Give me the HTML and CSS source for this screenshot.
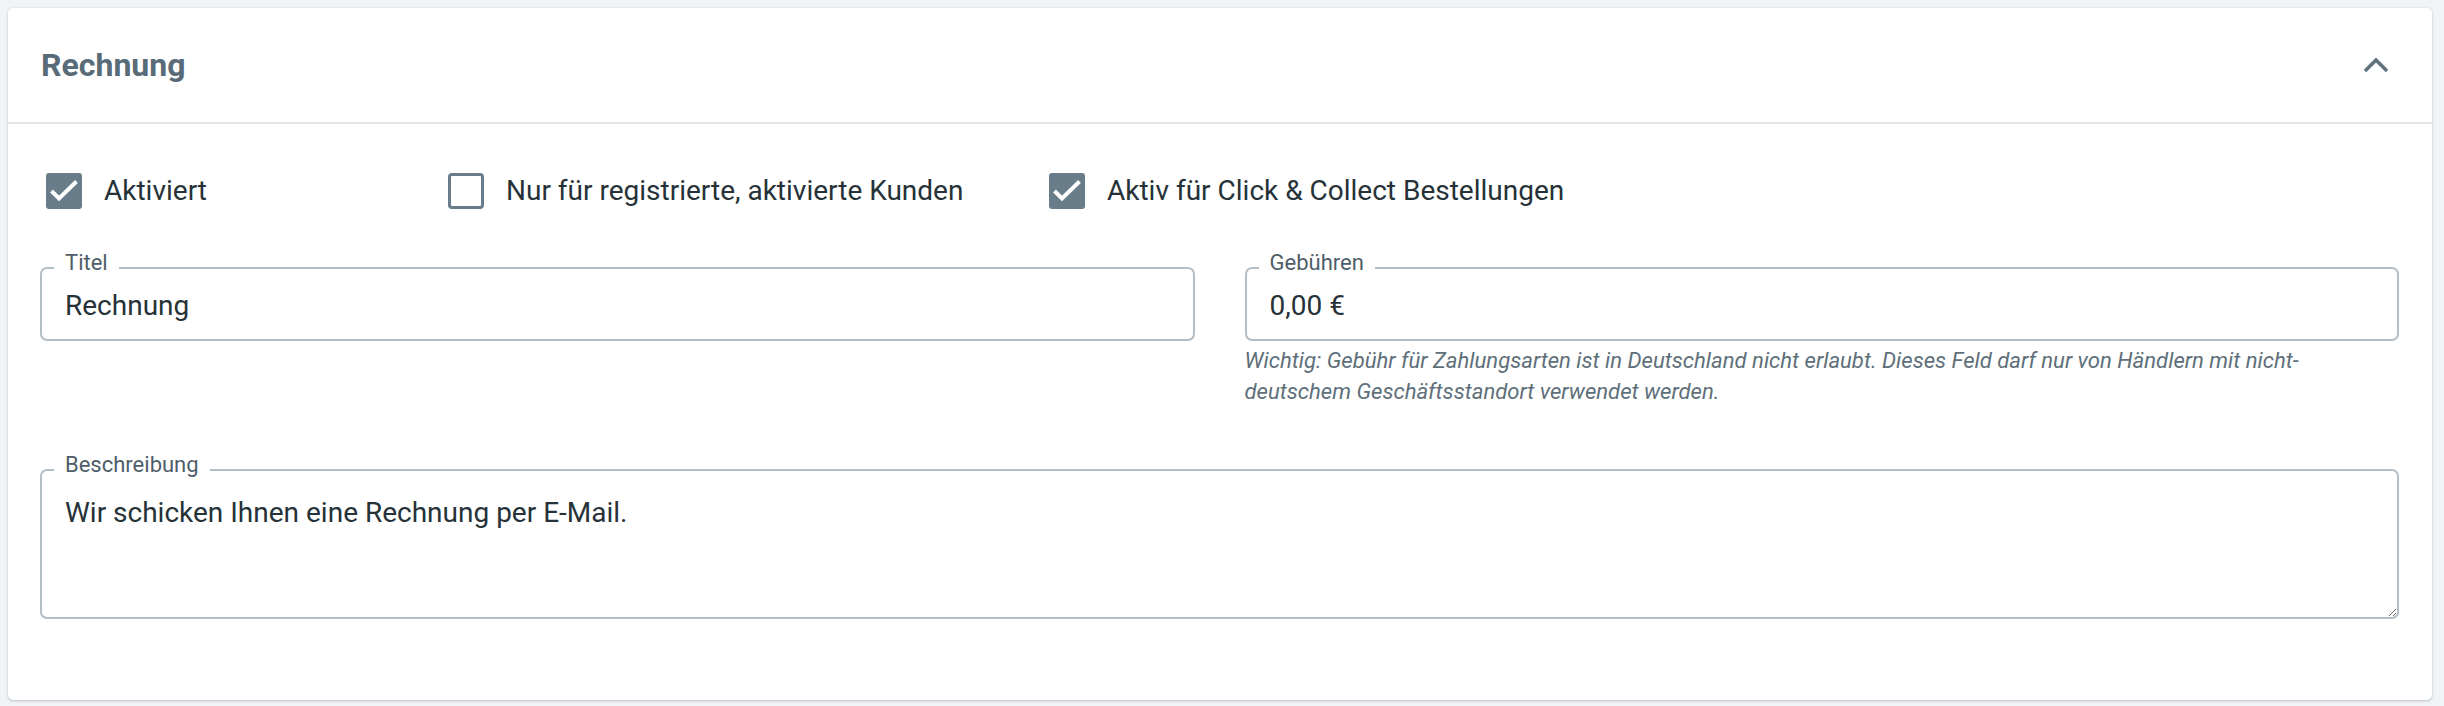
FILE: index.html
```html
<!DOCTYPE html>
<html lang="de">
<head>
<meta charset="utf-8">
<title>Rechnung</title>
<link rel="stylesheet" href="styles.css">
</head>
<body>
<section class="card">
  <header class="card-header">
    <h2 class="card-title">Rechnung</h2>
    <svg class="chevron" width="28" height="18" viewBox="0 0 28 18" aria-hidden="true">
      <path d="M3 15 L14 4 L25 15" fill="none" stroke="#5f7381" stroke-width="3.6" stroke-linejoin="miter"/>
    </svg>
  </header>
  <div class="card-body">
    <div class="checks">
      <label class="check">
        <span class="box checked"><svg width="36" height="36" viewBox="0 0 36 36"><path d="M5.5 18 L13 25.5 L30.5 8.5" fill="none" stroke="#fff" stroke-width="4"/></svg></span>
        <span class="check-text">Aktiviert</span>
      </label>
      <label class="check">
        <span class="box"></span>
        <span class="check-text">Nur für registrierte, aktivierte Kunden</span>
      </label>
      <label class="check">
        <span class="box checked"><svg width="36" height="36" viewBox="0 0 36 36"><path d="M5.5 18 L13 25.5 L30.5 8.5" fill="none" stroke="#fff" stroke-width="4"/></svg></span>
        <span class="check-text">Aktiv für Click &amp; Collect Bestellungen</span>
      </label>
    </div>
    <div class="fields">
      <div class="field-col">
        <div class="field">
          <span class="field-label">Titel</span>
          <input class="input" type="text" value="Rechnung">
        </div>
      </div>
      <div class="field-col">
        <div class="field">
          <span class="field-label">Gebühren</span>
          <input class="input" type="text" value="0,00 €">
        </div>
        <p class="hint">Wichtig: Gebühr für Zahlungsarten ist in Deutschland nicht erlaubt. Dieses Feld darf nur von Händlern mit nicht-deutschem Geschäftsstandort verwendet werden.</p>
      </div>
    </div>
    <div class="field area-field">
      <span class="field-label">Beschreibung</span>
      <textarea class="area">Wir schicken Ihnen eine Rechnung per E-Mail.</textarea>
    </div>
  </div>
</section>
</body>
</html>
```

FILE: styles.css
```css
html, body {
  margin: 0;
  padding: 0;
}
body {
  background: #f1f4f7;
  padding: 8px 12px 6px 8px;
  font-family: Roboto, "Liberation Sans", Arial, sans-serif;
  color: #263238;
}
.card {
  width: 2424px;
  height: 692px;
  box-sizing: border-box;
  background: #ffffff;
  border-radius: 5px;
  box-shadow: 0 1px 3px rgba(0, 0, 0, 0.22), 0 0 1px rgba(0, 0, 0, 0.12);
}
.card-header {
  height: 116px;
  box-sizing: border-box;
  border-bottom: 2px solid #e2e5e7;
  display: flex;
  align-items: center;
  justify-content: space-between;
  padding: 0 42px 0 33px;
}
.card-title {
  margin: 0;
  font-size: 32px;
  font-weight: 700;
  color: #586b78;
  line-height: normal;
}
.chevron {
  display: block;
}
.card-body {
  padding: 48px 33px 0 32px;
}
.checks {
  display: grid;
  grid-template-columns: 402px 601px auto;
  margin-left: 6px;
  height: 36px;
}
.check {
  display: flex;
  align-items: center;
  gap: 22px;
  font-size: 28px;
  color: #263238;
}
.box {
  width: 36px;
  height: 36px;
  box-sizing: border-box;
  border: 3.5px solid #687c89;
  border-radius: 4px;
  background: #fff;
  display: block;
  flex: none;
}
.box.checked {
  background: #687c89;
  border: none;
  border-radius: 3px;
}
.box svg {
  display: block;
}
.check-text {
  line-height: 36px;
  padding-top: 1px;
}
.fields {
  display: grid;
  grid-template-columns: 1fr 1fr;
  column-gap: 50px;
  margin-top: 59px;
}
.field {
  position: relative;
}
.field-label {
  position: absolute;
  top: -16px;
  left: 14px;
  padding: 0 11px;
  background: #fff;
  font-size: 22px;
  line-height: 24px;
  color: #4e5e69;
}
.input {
  display: block;
  width: 100%;
  height: 74px;
  box-sizing: border-box;
  border: 2px solid #b3bec5;
  border-radius: 7px;
  padding: 2px 24px 0 23px;
  font-family: inherit;
  font-size: 28px;
  color: #263238;
  background: transparent;
  outline: none;
}
.hint {
  margin: 4px 0 0 0;
  padding-right: 80px;
  font-size: 22.1px;
  line-height: 31px;
  font-style: italic;
  color: #5e6f7a;
}
.area-field {
  margin-top: 62px;
}
.area {
  display: block;
  width: 100%;
  height: 150px;
  box-sizing: border-box;
  border: 2px solid #b3bec5;
  border-radius: 7px;
  padding: 25px 24px 0 23px;
  font-family: inherit;
  font-size: 28px;
  line-height: 33px;
  color: #263238;
  background: transparent;
  outline: none;
  resize: vertical;
}
```
